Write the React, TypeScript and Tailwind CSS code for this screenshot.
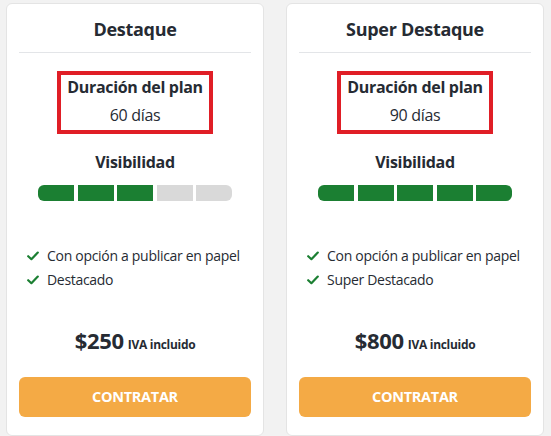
import React from 'react';

type Plan = {
  name: string;
  days: number;
  level: number;
  features: string[];
  price: string;
};

const plans: Plan[] = [
  { name: 'Destaque', days: 60, level: 3, features: ['Con opción a publicar en papel', 'Destacado'], price: '$250' },
  { name: 'Super Destaque', days: 90, level: 5, features: ['Con opción a publicar en papel', 'Super Destacado'], price: '$800' },
];

function Check() {
  return (
    <svg width="12" height="10" viewBox="0 0 12 10" className="shrink-0">
      <path d="M1.2 5.2 L4.4 8.2 L10.8 1.6" fill="none" stroke="#1b7f32" strokeWidth="2.2" strokeLinecap="round" strokeLinejoin="round" />
    </svg>
  );
}

function PlanCard({ plan }: { plan: Plan }) {
  return (
    <div className="w-[258px] rounded-md border border-[#e4e4e4] bg-white px-3 pt-[13px] pb-[10px] flex flex-col items-center text-[#262b33]">
      <h2 className="text-[18px] leading-6 font-bold">{plan.name}</h2>
      <div className="mt-[11px] h-px w-full bg-[#e3e5e8]" />

      {/* highlighted duration box */}
      <div className="mt-[18px] w-[156px] border-4 border-[#e01e26] pb-[3px] flex flex-col items-center">
        <span className="text-[16px] leading-6 font-bold">Duración del plan</span>
        <span className="mt-1 text-[16px] leading-6">{plan.days} días</span>
      </div>

      <h3 className="mt-4 text-[16px] leading-6 font-bold">Visibilidad</h3>
      <div className="mt-[11px] flex gap-[3.5px]">
        {[0, 1, 2, 3, 4].map((i) => (
          <div
            key={i}
            className={
              (i < plan.level ? 'bg-[#1b7f32] ' : 'bg-[#d9d9d9] ') +
              (i === 0 ? 'rounded-l-md ' : '') +
              (i === 4 ? 'rounded-r-md ' : '') +
              'h-4 w-[36px]'
            }
          />
        ))}
      </div>

      <ul className="mt-[43px] w-full pl-2">
        {plan.features.map((f) => (
          <li key={f} className="flex items-center gap-2 text-[14px] leading-6">
            <Check />
            <span>{f}</span>
          </li>
        ))}
      </ul>

      <div className="mt-[34px] flex items-baseline gap-1">
        <span className="text-[22px] leading-7 font-bold">{plan.price}</span>
        <span className="text-[12px] font-bold">IVA incluido</span>
      </div>

      <button className="mt-[23px] h-10 w-full rounded-md bg-[#f4aa45] text-[14.5px] font-bold text-white">
        CONTRATAR
      </button>
    </div>
  );
}

export default function App() {
  return (
    <div className="min-h-[436px] bg-[#f2f2f2] pl-[6px] pt-[3px] flex gap-[22px] font-['Open_Sans',sans-serif] tracking-[-0.3px]">
      {plans.map((p) => (
        <PlanCard key={p.name} plan={p} />
      ))}
    </div>
  );
}
